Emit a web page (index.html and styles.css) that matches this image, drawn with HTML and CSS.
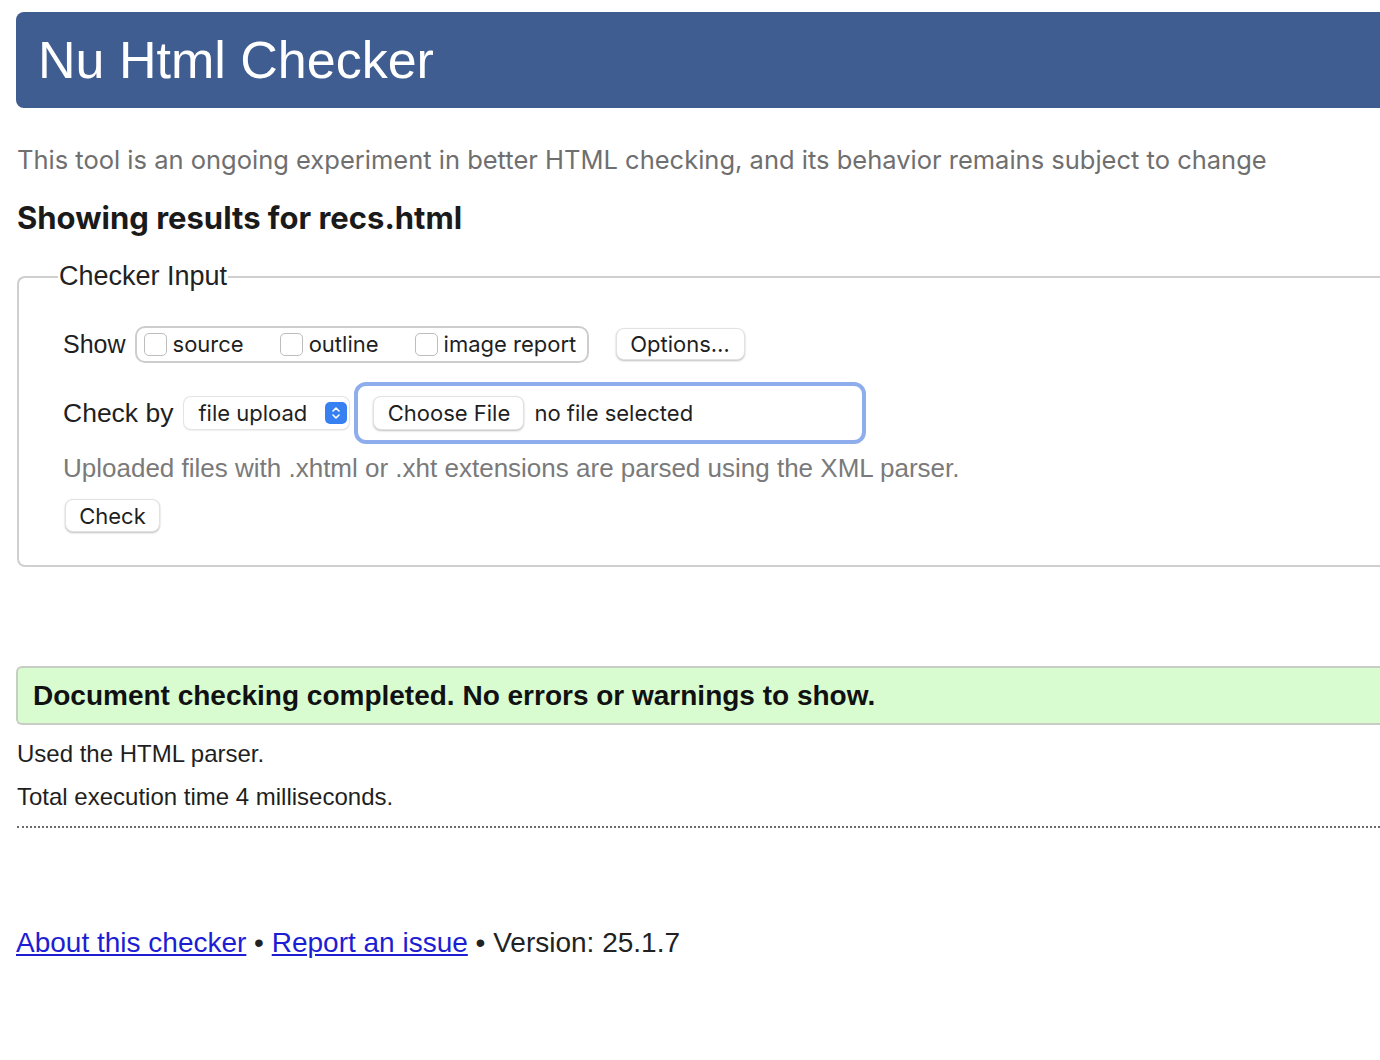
FILE: index.html
```html
<!DOCTYPE html>
<html lang="en">
<head>
<meta charset="utf-8">
<title>Showing results for recs.html - Nu Html Checker</title>
<link rel="stylesheet" href="styles.css">
</head>
<body>
<div class="page">
  <header class="banner"><h1 class="title">Nu Html Checker</h1></header>
  <p class="intro">This tool is an ongoing experiment in better HTML checking, and its behavior remains subject to change</p>
  <h2 class="results-heading">Showing results for recs.html</h2>

  <fieldset class="input-box">
    <legend class="legend">Checker Input</legend>
    <div class="row show-row">
      <span class="row-label">Show</span>
      <div class="check-group">
        <label class="check-item"><span class="box"></span>source</label>
        <label class="check-item"><span class="box"></span>outline</label>
        <label class="check-item"><span class="box"></span>image report</label>
      </div>
      <button class="btn options-btn" type="button">Options…</button>
    </div>
    <div class="row by-row">
      <span class="row-label by-label">Check by</span>
      <div class="select">
        <span class="select-text">file upload</span>
        <span class="stepper">
          <svg width="10" height="14" viewBox="0 0 10 14" fill="none" stroke="#fff" stroke-width="1.6" stroke-linecap="round" stroke-linejoin="round"><path d="M2 5 L5 2 L8 5"/><path d="M2 9 L5 12 L8 9"/></svg>
        </span>
      </div>
      <div class="file-focus">
        <button class="btn choose-btn" type="button">Choose File</button>
        <span class="file-status">no file selected</span>
      </div>
    </div>
    <p class="upload-note">Uploaded files with .xhtml or .xht extensions are parsed using the XML parser.</p>
    <button class="btn check-btn" type="button">Check</button>
  </fieldset>

  <div class="success">Document checking completed. No errors or warnings to show.</div>
  <p class="stat">Used the HTML parser.</p>
  <p class="stat">Total execution time 4 milliseconds.</p>
  <hr class="dots">

  <footer class="footer">
    <a href="#" class="link">About this checker</a> • <a href="#" class="link">Report an issue</a> • Version: 25.1.7
  </footer>
</div>
</body>
</html>
```

FILE: styles.css
```css
html, body {
  margin: 0;
  padding: 0;
  background: #fff;
  overflow: hidden;
}
body {
  font-family: "Liberation Sans", Arial, sans-serif;
  color: #1f1f1f;
}
.page {
  width: 1420px;
  padding: 12px 0 0 16px;
}
.banner {
  height: 96px;
  background: #3f5d91;
  border-radius: 8px 0 0 8px;
  display: flex;
  align-items: center;
}
.title {
  margin: 0 0 0 22px;
  font-family: "Liberation Sans", Arial, sans-serif;
  font-weight: normal;
  font-size: 52px;
  color: #fff;
  line-height: 1;
}
.intro {
  margin: 36px 0 0 1px;
  font-family: Inter, "Liberation Sans", sans-serif;
  font-size: 25.5px;
  line-height: 32px;
  color: #6f6f6f;
}
.results-heading {
  margin: 24px 0 0 1px;
  font-family: Inter, "Liberation Sans", sans-serif;
  font-weight: 700;
  font-size: 31px;
  line-height: 36px;
  color: #1a1a1a;
}
.input-box {
  margin: 25px 0 0 1px;
  padding: 20px 0 30px 44px;
  border: 2px solid #cfcfcf;
  border-right: none;
  border-radius: 8px 0 0 8px;
  height: 252px;
  box-sizing: content-box;
}
.legend {
  margin-left: -5px;
  padding: 0 1px;
  font-size: 27px;
  color: #222;
}
.row {
  display: flex;
  align-items: center;
}
.row-label {
  font-size: 25px;
  color: #1f1f1f;
  margin-right: 9px;
}
.by-label {
  font-size: 26.5px;
  margin-right: 11px;
}
.show-row {
  height: 40px;
  margin-top: 12px;
}
.check-group {
  display: flex;
  align-items: center;
  height: 37px;
  width: 454px;
  border: 2px solid #cdcdcd;
  border-radius: 10px;
  box-sizing: border-box;
  padding-left: 7px;
  gap: 36px;
}
.check-item {
  display: flex;
  align-items: center;
  font-family: Inter, "Liberation Sans", sans-serif;
  font-size: 22px;
  color: #1f1f1f;
}
.box {
  width: 21px;
  height: 21px;
  border: 1px solid #bdbdbd;
  border-radius: 5px;
  background: #fff;
  margin-right: 6px;
  box-sizing: content-box;
}
.btn {
  font-family: Inter, "Liberation Sans", sans-serif;
  font-size: 22px;
  color: #1f1f1f;
  background: #fff;
  border: 1px solid #e2e2e2;
  border-radius: 8px;
  box-shadow: 0 1px 2px rgba(0,0,0,0.25);
  padding: 0 12px;
  height: 32px;
}
.options-btn {
  margin-left: 27px;
  width: 129px;
}
.by-row {
  margin-top: 18px;
  height: 62px;
}
.select {
  display: flex;
  align-items: center;
  justify-content: space-between;
  width: 165px;
  height: 32px;
  box-sizing: border-box;
  padding: 0 2px 0 14px;
  background: #fff;
  border-radius: 7px;
  box-shadow: 0 0 0 1px #e4e4e4, 0 1px 2px rgba(0,0,0,0.2);
}
.select-text {
  font-family: Inter, "Liberation Sans", sans-serif;
  font-size: 22px;
}
.stepper {
  width: 22px;
  height: 22px;
  border-radius: 5px;
  background: #3680f2;
  display: flex;
  align-items: center;
  justify-content: center;
}
.file-focus {
  margin-left: 5px;
  width: 512px;
  height: 62px;
  box-sizing: border-box;
  border: 4px solid #8eadec;
  border-radius: 12px;
  display: flex;
  align-items: center;
  padding-left: 15px;
}
.choose-btn {
  width: 151px;
  height: 34px;
}
.file-status {
  margin-left: 10px;
  font-family: Inter, "Liberation Sans", sans-serif;
  font-size: 22px;
  color: #1f1f1f;
}
.upload-note {
  margin: 9px 0 0 0;
  font-size: 26px;
  line-height: 30px;
  color: #7a7a7a;
}
.check-btn {
  margin: 16px 0 0 2px;
  width: 95px;
  height: 33px;
}
.success {
  margin: 99px 0 0 0;
  height: 59px;
  box-sizing: border-box;
  background: #d8fcd0;
  border: 2px solid #c7cdc4;
  border-right: none;
  border-radius: 6px 0 0 6px;
  display: flex;
  align-items: center;
  padding-left: 15px;
  font-weight: bold;
  font-size: 28px;
  color: #111;
}
.stat {
  margin: 14px 0 0 1px;
  font-size: 24px;
  line-height: 29px;
  color: #1f1f1f;
}
.dots {
  margin: 15px 0 0 1px;
  border: none;
  border-top: 2px dotted #6a6a6a;
  height: 0;
}
.footer {
  margin-top: 99px;
  font-size: 28px;
  color: #222;
}
.link {
  color: #1d1dd4;
  text-decoration: underline;
}
```
